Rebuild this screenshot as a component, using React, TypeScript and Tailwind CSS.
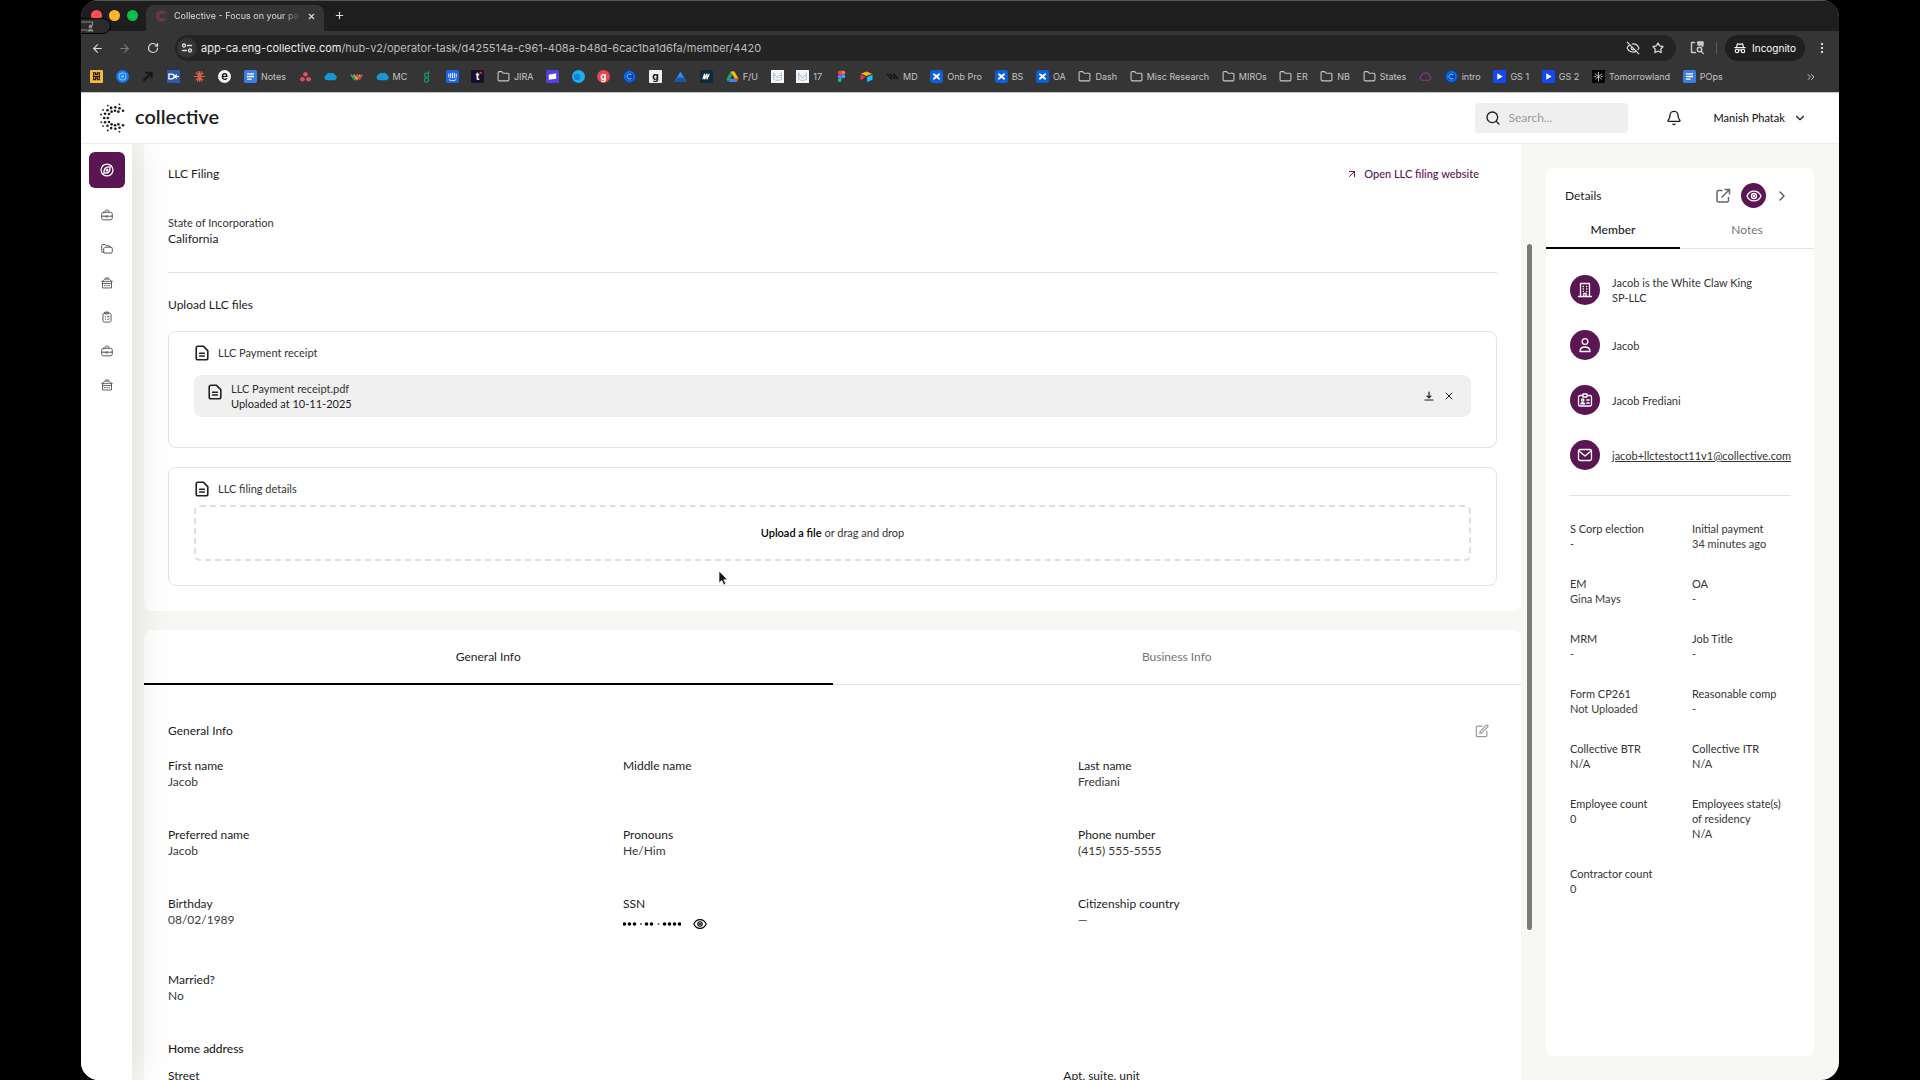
import type { ReactNode } from 'react';
import {
  ArrowLeft,
  ArrowRight,
  ArrowUpRight,
  Bell,
  ChevronDown,
  ChevronRight,
  ChevronsRight,
  EyeOff,
  Folder,
  Plus,
  RotateCw,
  Search,
  Star,
  X,
} from 'lucide-react';

const RINGS = [
  { r: 7.2, size: 1.3, angles: [62, 90, 118, 146, 180, 214, 242, 270, 298] },
  { r: 10.8, size: 1.3, angles: [42, 65, 88, 111, 134, 157, 180, 203, 226, 249, 272, 295, 318] },
  { r: 14.4, size: 0.9, angles: [72, 120, 146, 166, 197, 214, 240, 288] },
];

function CollectiveMark({ className }: { readonly className?: string }) {
  return (
    <svg viewBox="-16 -16 28 32" className={className} fill="currentColor" aria-hidden="true">
      {RINGS.flatMap((ring) =>
        ring.angles.map((angle) => (
          <circle
            key={`${ring.r}-${angle}`}
            cx={ring.r * Math.cos((angle * Math.PI) / 180)}
            cy={-ring.r * Math.sin((angle * Math.PI) / 180)}
            r={ring.size}
          />
        )),
      )}
    </svg>
  );
}

function Line({ children, className, box = 24, width = 2 }: {
  readonly children: ReactNode;
  readonly className?: string;
  readonly box?: number;
  readonly width?: number;
}) {
  return (
    <svg
      viewBox={`0 0 ${box} ${box}`}
      className={className}
      fill="none"
      stroke="currentColor"
      strokeWidth={width}
      strokeLinecap="round"
      strokeLinejoin="round"
      aria-hidden="true"
    >
      {children}
    </svg>
  );
}

function FileIcon() {
  return (
    <Line box={16} width={1.6} className="size-4 shrink-0 text-[#222]">
      <path d="M4 1.2h5.2l4.6 4.4V13a1.8 1.8 0 0 1-1.8 1.8H4A1.8 1.8 0 0 1 2.2 13V3A1.8 1.8 0 0 1 4 1.2Z" />
      <path d="M5.6 8.2h4.8M5.6 11h4.8" />
    </Line>
  );
}

function EyeIcon({ className }: { readonly className?: string }) {
  return (
    <Line className={className}>
      <path d="M1.5 12C3.5 7.2 7.4 4.6 12 4.6S20.5 7.2 22.5 12c-2 4.8-5.9 7.4-10.5 7.4S3.5 16.8 1.5 12Z" />
      <circle cx="12" cy="12" r="3.8" />
      <circle cx="12" cy="12" r="0.8" />
    </Line>
  );
}

function BriefcaseIcon() {
  return (
    <Line box={16} width={1.3} className="size-3">
      <path d="M5.4 4.4V3.2A1.6 1.6 0 0 1 7 1.6h2a1.6 1.6 0 0 1 1.6 1.6v1.2" />
      <rect x="1" y="4.4" width="14" height="10" rx="2.2" />
      <path d="M1 9.6h4.5M10.5 9.6H15M6.6 9.2h2.8v1.4H6.6z" />
    </Line>
  );
}

function FoldersIcon() {
  return (
    <Line box={16} width={1.3} className="size-3">
      <path d="M3.4 12.6H2.6A1.6 1.6 0 0 1 1 11V3.6A1.6 1.6 0 0 1 2.6 2h2.8l1.8 1.8h3.6a1.6 1.6 0 0 1 1.6 1.6" />
      <path d="M6 5.6h7.4A1.6 1.6 0 0 1 15 7.2v4.6a1.6 1.6 0 0 1-1.6 1.6H5.2a1.6 1.6 0 0 1-1.6-1.6V8Z" />
    </Line>
  );
}

function OfficeIcon() {
  return (
    <Line box={16} width={1.2} className="size-3">
      <path d="M1 5.8h14M2.2 5.6 5 2.8h6l2.800 2.800M5.600 1.400h4.800M2 5.800v8.800h12V5.800" />
      <path d="M2 8.600h12M4.600 11.600h1M7.500 11.600h1M10.400 11.600h1" />
    </Line>
  );
}

function ClipboardIcon() {
  return (
    <Line box={16} width={1.3} className="size-3">
      <rect x="2.6" y="2.8" width="10.8" height="12" rx="2" />
      <path d="M6 1.4h4v2.4H6zM5.600 7.600h.6M8.600 7.600h2M5.600 10.800h.6M8.600 10.800h2" />
    </Line>
  );
}

function CompassIcon() {
  return (
    <Line box={16} width={1.5} className="size-[14px]">
      <circle cx="8" cy="8" r="6.8" />
      <path d="M11.6 4.4c-3.4-.2-6.4 1.2-6.8 3.8-.2 1.4-.2 2.4-.4 3.4 3.4.2 6.4-1.2 6.8-3.8.2-1.4.2-2.4.4-3.4Z" />
      <circle cx="8" cy="8" r="1" />
    </Line>
  );
}

function Tile({ bg, children, round = 2 }: { readonly bg: string; readonly children?: ReactNode; readonly round?: number }) {
  return (
    <svg viewBox="0 0 14 14" className="size-[13px] shrink-0" aria-hidden="true">
      <rect width="14" height="14" rx={round} fill={bg} />
      {children}
    </svg>
  );
}

const docIcon = (
  <Tile bg="#3b7de0">
    <path d="M3.2 4.2h7.6M3.2 7h7.6M3.2 9.8h5" stroke="#fff" strokeWidth="1.4" />
  </Tile>
);
const cloudIcon = (
  <Tile bg="none">
    <path d="M3.5 11a3 3 0 0 1-1-5.8A3 3 0 0 1 7 3.6a3.2 3.2 0 0 1 4.8 1.6A3 3 0 0 1 11 11Z" fill="#1797d4" />
  </Tile>
);
const confluenceIcon = (
  <Tile bg="#0c5fd6" round={3}>
    <path d="M3.6 4.2c2 .4 4.8 4.8 6.8 5.6M10.4 4.2c-2 .4-4.800 4.800-6.800 5.600" stroke="#fff" strokeWidth="2.2" fill="none" />
  </Tile>
);
const ringIcon = (
  <Tile bg="#0b3e9c" round={7}>
    <circle cx="7" cy="7" r="5" fill="none" stroke="#1673ee" strokeWidth="1.6" />
    <path d="M9 5.4a2.6 2.6 0 1 0 0 3.2" fill="none" stroke="#3aa0ff" strokeWidth="1.6" />
  </Tile>
);
const gridTile = (
  <Tile bg="#f4f6f8" round={0}>
    <path d="M3 3v8M11 3v8M4 5l3 3.500L10 5M5 11h4" stroke="#5f93c8" fill="none" strokeDasharray="1.5 .8" />
  </Tile>
);
const playIcon = (
  <Tile bg="#1348f2" round={0}>
    <path d="M4.6 3.5v7L10.400 7Z" fill="#fff" />
  </Tile>
);
const folderIcon = <Folder className="size-[13px] shrink-0 text-[#c8c8c8]" strokeWidth={2} />;

function Glyph({ children, fill, size = 10 }: { readonly children: string; readonly fill: string; readonly size?: number }) {
  return (
    <text x="7" y="10.4" textAnchor="middle" fontSize={size} fontWeight="700" fill={fill}>
      {children}
    </text>
  );
}

const bookmarks: { readonly icon: ReactNode; readonly label?: string }[] = [
  {
    icon: (
      <Tile bg="#f6bd3a" round={1}>
        <path d="M3 3h3v2h2V3h3M3 7h8M3 10.500h3v-2h2v2h3M4 3v8M10 3v8" stroke="#221a05" fill="none" strokeWidth="1.3" />
      </Tile>
    ),
  },
  {
    icon: (
      <Tile bg="#1479e6" round={7}>
        <circle cx="7" cy="7" r="3.8" fill="none" stroke="#7fc0ff" strokeWidth="1.2" />
        <circle cx="7" cy="7" r="1.6" fill="#7fc0ff" />
      </Tile>
    ),
  },
  { icon: <Tile bg="none"><path d="M4.5 3h7v6M11 3.5l-8.500 8" stroke="#161616" strokeWidth="2.2" fill="none" /></Tile> },
  {
    icon: (
      <Tile bg="#3158ac" round={0}>
        <path d="M2 4.5h3.2a2.5 2.5 0 0 1 0 5H2ZM8 7h5M10.5 4.8 8.3 7l2.2 2.2" stroke="#fff" strokeWidth="1.3" fill="none" />
      </Tile>
    ),
  },
  {
    icon: (
      <Tile bg="none">
        <path d="M7 1v12M1 7h12M2.8 2.8l8.4 8.4M11.2 2.8l-8.4 8.4M4.6 1.4l4.8 11.2M9.4 1.4 4.6 12.6" stroke="#dc5f48" strokeWidth="1.1" />
      </Tile>
    ),
  },
  { icon: <Tile bg="#f5f5f5" round={7}><Glyph fill="#111" size={12}>e</Glyph></Tile> },
  { icon: docIcon, label: 'Notes' },
  {
    icon: (
      <Tile bg="none">
        <circle cx="7" cy="4.6" r="2.5" fill="#e0505e" />
        <circle cx="3.7" cy="10" r="2.5" fill="#e0505e" />
        <circle cx="10.3" cy="10" r="2.5" fill="#e0505e" />
      </Tile>
    ),
  },
  { icon: cloudIcon },
  {
    icon: (
      <Tile bg="none">
        <path d="m1 5 4 5 3-5" stroke="#2fa36b" strokeWidth="2" fill="none" />
        <path d="m4 5 3.500 5L11 5" stroke="#e9a23a" strokeWidth="1.8" fill="none" />
        <path d="m7.5 5 3 4.500L13 5" stroke="#dc4a45" strokeWidth="2" fill="none" />
      </Tile>
    ),
  },
  { icon: cloudIcon, label: 'MC' },
  {
    icon: (
      <Tile bg="none">
        <circle cx="7" cy="5.6" r="2.2" fill="none" stroke="#159a62" strokeWidth="1.3" />
        <circle cx="7" cy="10.8" r="2.3" fill="none" stroke="#159a62" strokeWidth="1.3" />
        <path d="M8.5 4 10 1.5" stroke="#159a62" strokeWidth="1.3" />
      </Tile>
    ),
  },
  {
    icon: (
      <Tile bg="#1c62ea">
        <path d="M3 4v4M5 3.2v5.6M7 3v6M9 3.2v5.6M11 4v4M3 10.2c2.4 1.8 5.6 1.8 8 0" stroke="#fff" strokeWidth="1" fill="none" />
      </Tile>
    ),
  },
  { icon: <Tile bg="#1a0d2c"><Glyph fill="#fff" size={11}>t</Glyph><path d="M9 2.5h2v2" stroke="#e8453c" strokeWidth="1.2" fill="none" /></Tile> },
  { icon: folderIcon, label: 'JIRA' },
  { icon: <Tile bg="#5440e0"><path d="m3 5 8-1.500v6l-8 1Z" fill="#fff" /></Tile> },
  { icon: <Tile bg="#1cb0f3" round={7}><circle cx="5.5" cy="7.5" r="3.5" fill="#0d86d6" /></Tile> },
  { icon: <Tile bg="#e5484d" round={7}><Glyph fill="#fff">g</Glyph></Tile> },
  { icon: ringIcon },
  { icon: <Tile bg="#f1f1f1" round={1}><Glyph fill="#111" size={11}>g</Glyph></Tile> },
  { icon: <Tile bg="none"><path d="m7 1.500 6.500 11H.5Z" fill="#2f8fe8" /><path d="M4 8h6l3.500 4.500H.5Z" fill="#1554a8" /></Tile> },
  { icon: <Tile bg="#0d2b3c"><path d="m3 10 2-6v6l2.500-6v6L10 4" stroke="#fff" strokeWidth="1.3" fill="none" /></Tile> },
  {
    icon: (
      <Tile bg="none">
        <path d="M5 1.5h4l-5 9-2.500 2-1-3Z" fill="#1fa463" />
        <path d="M5 1.5h4l4.500 8h-4Z" fill="#fbbc05" />
        <path d="M4.5 9.5h9l-2 3.500h-9Z" fill="#4285f4" />
        <path d="M9.5 9.5h4l-2 3.500Z" fill="#ea4335" />
      </Tile>
    ),
    label: 'F/U',
  },
  { icon: gridTile },
  { icon: gridTile, label: '17' },
  {
    icon: (
      <Tile bg="none">
        <path d="M7 .8H5a2 2 0 0 0 0 4h2Z" fill="#f24e1e" />
        <path d="M7 .8h2a2 2 0 0 1 0 4H7Z" fill="#ff7262" />
        <path d="M7 4.8H5a2 2 0 0 0 0 4h2Z" fill="#a259ff" />
        <circle cx="9" cy="6.8" r="2" fill="#1abcfe" />
        <path d="M7 8.8H5a2 2 0 1 0 2 2Z" fill="#0acf83" />
      </Tile>
    ),
  },
  {
    icon: (
      <Tile bg="none">
        <path d="M7 1.5 13 4 7 6.500 1 4Z" fill="#fcb400" />
        <path d="M7.6 7.5 13.500 5v5.500l-5.900 2.300Z" fill="#18bfff" />
        <path d="m.5 5 5.700 2.500L.5 11Z" fill="#f82b60" />
      </Tile>
    ),
  },
  { icon: <Tile bg="none"><path d="m1 4 5.500 6M4.500 4l5.500 6M8 4l5 6" stroke="#141414" strokeWidth="1.6" /></Tile>, label: 'MD' },
  { icon: confluenceIcon, label: 'Onb Pro' },
  { icon: confluenceIcon, label: 'BS' },
  { icon: confluenceIcon, label: 'OA' },
  { icon: folderIcon, label: 'Dash' },
  { icon: folderIcon, label: 'Misc Research' },
  { icon: folderIcon, label: 'MIROs' },
  { icon: folderIcon, label: 'ER' },
  { icon: folderIcon, label: 'NB' },
  { icon: folderIcon, label: 'States' },
  {
    icon: (
      <Tile bg="none">
        <path d="M3.5 11a2.6 2.6 0 0 1-.6-5 4.3 4.3 0 0 1 8.2 0 2.6 2.6 0 0 1-.6 5Z" fill="none" stroke="#93308c" strokeWidth="1.2" />
      </Tile>
    ),
  },
  { icon: ringIcon, label: 'intro' },
  { icon: playIcon, label: 'GS 1' },
  { icon: playIcon, label: 'GS 2' },
  {
    icon: (
      <Tile bg="#050505" round={0}>
        <path d="M7 2v10M3 4l4 3 4-3M3.5 10 7 7l3.5 3M2.5 7h2M9.5 7h2" stroke="#d8d8d8" fill="none" strokeWidth=".9" />
      </Tile>
    ),
    label: 'Tomorrowland',
  },
  { icon: docIcon, label: 'POps' },
];

function BrowserChrome() {
  return (
    <div className="relative z-30 shrink-0 border-b border-[#c4c7c7] bg-[#353535] font-['Inter',sans-serif] text-[#dedede]">
      <div className="flex h-[31px] items-end border-t border-[#555] bg-[#1e1e1e] pl-2.5">
        <div className="mb-2.5 flex gap-[7px]">
          <span className="size-[11px] rounded-full bg-[#ff4f56]" />
          <span className="size-[11px] rounded-full bg-[#fdb52c]" />
          <span className="size-[11px] rounded-full bg-[#0cbd4d]" />
        </div>
        <div className="ml-2 flex h-[26px] w-[178px] items-center gap-1.5 rounded-t-lg bg-[#353535] px-2 pb-1">
          <CollectiveMark className="size-3.5 shrink-0 text-[#e0405e]" />
          <span className="flex-1 overflow-hidden whitespace-nowrap mask-r-from-85% text-[9px]">Collective - Focus on your pa</span>
          <button type="button" aria-label="Close tab" className="shrink-0"><X className="size-[9px]" strokeWidth={3} /></button>
        </div>
        <button type="button" aria-label="New tab" className="mb-[10px] ml-2.5"><Plus className="size-[11px]" strokeWidth={2.5} /></button>
      </div>
      <div className="flex items-center py-1 pr-4 pl-2.5">
        <button type="button" aria-label="Back"><ArrowLeft className="size-[13px]" /></button>
        <button type="button" aria-label="Forward" className="ml-3.5 text-[#7b7b7b]"><ArrowRight className="size-[13px]" /></button>
        <button type="button" aria-label="Reload" className="ml-4"><RotateCw className="size-3" strokeWidth={2.4} /></button>
        <div className="ml-4 flex h-[26px] flex-1 items-center rounded-full bg-[#242424] pr-3 pl-0.5">
          <span className="grid size-5 place-items-center rounded-full bg-[#353535]">
            <Line box={12} width={1.3} className="size-3">
              <circle cx="3" cy="3.5" r="1.5" />
              <path d="M6.5 3.5h4M1.5 8.5h4" />
              <circle cx="9" cy="8.5" r="1.5" />
            </Line>
          </span>
          <p className="ml-1 flex-1 text-[11px] text-[#bdbdbd]">
            <span className="text-[#ececec]">app-ca.eng-collective.com</span>
            /hub-v2/operator-task/d425514a-c961-408a-b48d-6cac1ba1d6fa/member/4420
          </p>
          <EyeOff className="size-3.5" />
          <button type="button" aria-label="Bookmark this tab" className="ml-3"><Star className="size-3" strokeWidth={2.4} /></button>
        </div>
        <Line box={14} width={1.4} className="ml-3.5 size-[14px] text-[#c9c9c9]">
          <path d="M5.5 11.5h-4v-10h3M7.5 1.5h5v4" />
          <path d="M8 1h5v3H8z" fill="currentColor" />
          <circle cx="9.5" cy="8.5" r="2.2" />
          <path d="m11.2 10.2 2 2.2" />
        </Line>
        <span className="mr-2 ml-3 h-3 w-px bg-[#5c5c5c]" />
        <div className="flex h-[26px] items-center gap-1.5 rounded-full bg-[#1f1f1f] px-[9px] text-[10px] text-white">
          <Line box={14} width={1.3} className="size-3">
            <path d="M1 6.5h12M3 6l1-4 3 .8L10 2l1 4M5.5 9.8c1-.8 2-.8 3 0" />
            <circle cx="3.5" cy="10.5" r="2" />
            <circle cx="10.5" cy="10.5" r="2" />
          </Line>
          Incognito
        </div>
        <button type="button" aria-label="Browser menu" className="ml-4 flex flex-col gap-[2px]">
          <span className="size-[2px] bg-[#dedede]" />
          <span className="size-[2px] bg-[#dedede]" />
          <span className="size-[2px] bg-[#dedede]" />
        </button>
      </div>
      <div className="flex h-[27px] items-center pr-[22px] pb-1 pl-[9px] text-[9px] text-[#c4c4c4]">
        <ul className="mr-[82px] flex flex-1 items-center justify-between">
          {bookmarks.map((bookmark, index) => (
            <li key={index}>
              <a href="#" aria-label={bookmark.label ?? 'Bookmark'} className="flex items-center gap-1 whitespace-nowrap">
                {bookmark.icon}
                {bookmark.label}
              </a>
            </li>
          ))}
        </ul>
        <ChevronsRight className="size-3" />
      </div>
      <div className="absolute top-[18px] -left-4 flex h-4 w-[46px] items-center rounded-full border border-black bg-[#2b2b2b] pl-3.5">
        <Line box={14} width={1.2} className="size-3.5 text-[#8d8d8d]">
          <path d="M0 3h12.5v3M0 11h7" />
          <circle cx="10.5" cy="7.5" r="1.3" fill="currentColor" />
          <path d="M8 12c.5-2 4.500-2 5 0Z" fill="currentColor" />
        </Line>
      </div>
    </div>
  );
}

function AppHeader() {
  return (
    <header className="relative z-20 flex h-[51px] shrink-0 items-center border-b border-[#ededed] bg-white pr-8 pl-[18px]">
      <a href="#" className="flex items-center gap-2">
        <CollectiveMark className="h-8 w-7" />
        <span className="pb-1 text-[20px] leading-6 font-semibold">collective</span>
      </a>
      <label className="ml-auto flex h-[30px] w-[153px] items-center gap-2 rounded-sm bg-[#efefef] pl-[10px]">
        <Search className="size-4 shrink-0" />
        <input type="search" aria-label="Search" placeholder="Search..." className="w-full bg-transparent text-xs outline-none placeholder:text-[#9a9a9a]" />
      </label>
      <button type="button" aria-label="Notifications" className="ml-[38px]"><Bell className="size-4" /></button>
      <button type="button" className="ml-8 flex items-center gap-2 text-[11px] font-medium">
        Manish Phatak
        <ChevronDown className="size-3.5" />
      </button>
    </header>
  );
}

const navItems = [
  { label: 'Work', icon: <BriefcaseIcon /> },
  { label: 'Folders', icon: <FoldersIcon /> },
  { label: 'Offices', icon: <OfficeIcon /> },
  { label: 'Tasks', icon: <ClipboardIcon /> },
  { label: 'Business', icon: <BriefcaseIcon /> },
  { label: 'Accounts', icon: <OfficeIcon /> },
];

function Sidebar() {
  return (
    <nav className="z-10 flex w-[51px] shrink-0 flex-col items-center bg-white pt-2 text-[#555] shadow-[0_0_40px_rgba(40,45,20,0.14)]">
      <a href="#" aria-label="Home" className="mb-[10px] grid size-9 place-items-center rounded-md bg-[#5a1552] text-white">
        <CompassIcon />
      </a>
      {navItems.map((item) => (
        <a key={item.label} href="#" aria-label={item.label} className="grid h-[34px] w-9 place-items-center">
          {item.icon}
        </a>
      ))}
    </nav>
  );
}

function Field({ label, children, small }: { readonly label: string; readonly children?: ReactNode; readonly small?: boolean }) {
  return (
    <div className={small ? 'text-[11px] leading-[15px] text-[#333]' : 'text-xs leading-4'}>
      <dt>{label}</dt>
      <dd className="text-[#3a3a3a]">{children}</dd>
    </div>
  );
}

function FilingCard() {
  return (
    <section className="rounded-b-lg bg-white px-6 pt-[22px] pb-[25px]">
      <div className="flex items-center justify-between pr-[18px]">
        <h2 className="text-xs leading-4">LLC Filing</h2>
        <a href="#" className="flex items-center gap-1.5 text-[11px] leading-4 font-medium text-[#5a1552]">
          <ArrowUpRight className="size-3" />
          Open LLC filing website
        </a>
      </div>
      <dl className="mt-[33px] border-b border-[#dfdfdf] pb-[25px] leading-4">
        <dt className="text-[11px] text-[#333]">State of Incorporation</dt>
        <dd className="text-xs leading-4">California</dd>
      </dl>
      <h3 className="mt-6 text-xs leading-4">Upload LLC files</h3>
      <div className="mt-[18px] rounded-lg border border-[#e2e2e2] px-[25px] pt-[13px] pb-[30px] text-[11px]">
        <div className="flex items-center gap-2 leading-4 text-[#333]">
          <FileIcon />
          LLC Payment receipt
        </div>
        <div className="mt-3.5 flex items-center rounded-lg bg-[#f0f0f0] px-3 py-1.5 leading-[15px]">
          <div className="flex flex-1 items-start gap-2 pl-px">
            <span className="pt-[3px]"><FileIcon /></span>
            <div>
              <p className="text-[#333]">LLC Payment receipt.pdf</p>
              <p>Uploaded at 10-11-2025</p>
            </div>
          </div>
          <button type="button" aria-label="Download file">
            <Line box={10} width={1.2} className="size-2.5">
              <path d="M5 1v5.500M3 4.800l2 2 2-2M1 9h8" />
            </Line>
          </button>
          <button type="button" aria-label="Remove file" className="mr-1 ml-[9px]"><X className="size-3" /></button>
        </div>
      </div>
      <div className="mt-[19px] rounded-lg border border-[#e2e2e2] px-[25px] pt-[13px] pb-6 text-[11px] leading-4">
        <div className="flex items-center gap-2 text-[#333]">
          <FileIcon />
          LLC filing details
        </div>
        <button type="button" className="mt-2 block w-full rounded-md border-2 border-dashed border-[#dfdfd5] py-[18px] text-[#333]">
          <strong className="font-semibold text-black">Upload a file</strong> or drag and drop
        </button>
      </div>
    </section>
  );
}

function InfoCard() {
  return (
    <section className="mt-[19px] rounded-t-lg bg-white">
      <div role="tablist" className="flex text-xs leading-4">
        <button type="button" role="tab" aria-selected="true" className="flex-1 border-b-2 border-black pt-[19px] pb-[18px]">General Info</button>
        <button type="button" role="tab" aria-selected="false" className="flex-1 border-b border-[#e2e2e2] pt-[19px] pb-[19px] text-[#757575]">Business Info</button>
      </div>
      <div className="px-6 pt-[38px]">
        <div className="flex items-center justify-between pr-2">
          <h2 className="text-xs leading-4">General Info</h2>
          <button type="button" aria-label="Edit general info" className="text-[#9a9a9a]">
            <Line box={16} width={1.4} className="size-3.5">
              <path d="M8 2.5H3.2A1.7 1.7 0 0 0 1.5 4.2v8.6a1.7 1.7 0 0 0 1.7 1.7h8.6a1.7 1.7 0 0 0 1.7-1.7V8" />
              <path d="m6 8.4 6.8-6.9a1.3 1.3 0 0 1 1.8 1.8L7.7 10.2l-2.3.6Z" />
            </Line>
          </button>
        </div>
        <dl className="mt-[19px] grid grid-cols-3 gap-x-9 gap-y-[37px]">
          <Field label="First name">Jacob</Field>
          <Field label="Middle name" />
          <Field label="Last name">Frediani</Field>
          <Field label="Preferred name">Jacob</Field>
          <Field label="Pronouns">He/Him</Field>
          <Field label="Phone number">(415) 555-5555</Field>
          <Field label="Birthday">08/02/1989</Field>
          <Field label="SSN">
            <span className="flex h-[23px] items-center gap-3 text-black">
              <svg viewBox="0 0 58 6" className="h-1.5 w-[58px]" fill="currentColor" role="img" aria-label="Hidden number">
                {[2, 7, 12, 24, 29, 42, 47, 52, 57].map((cx) => <circle key={cx} cx={cx - 0.5} cy="3" r="1.8" />)}
                <path d="M17 2.6h2v.8h-2zM34.5 2.6h2v.8h-2z" />
              </svg>
              <button type="button" aria-label="Show SSN"><EyeIcon className="size-3.5" /></button>
            </span>
          </Field>
          <Field label="Citizenship country">—</Field>
          <Field label="Married?">No</Field>
        </dl>
        <h3 className="mt-[37px] text-xs leading-4 font-medium">Home address</h3>
        <div className="mt-[11px] flex gap-7 text-xs leading-4">
          <span className="flex-2">Street</span>
          <span className="flex-1">Apt, suite, unit</span>
        </div>
      </div>
    </section>
  );
}

const contacts = [
  {
    text: 'Jacob is the White Claw King SP-LLC',
    icon: (
      <>
        <path d="M3.5 14.5v-13h9v13M1.5 14.5h13M6.8 14.5v-3h2.4v3" />
        <path d="M6.2 4.5h.2M9.6 4.5h.2M6.2 7h.2M9.6 7h.2M6.2 9.3h.2M9.6 9.3h.2" />
      </>
    ),
  },
  {
    text: 'Jacob',
    icon: (
      <>
        <circle cx="8" cy="4.5" r="2.9" />
        <path d="M3 14.5c0-2.8 1.8-4.5 5-4.5s5 1.7 5 4.5Z" />
      </>
    ),
  },
  {
    text: 'Jacob Frediani',
    icon: (
      <>
        <path d="M5.8 3.5H3A1.5 1.5 0 0 0 1.5 5v7.5A1.5 1.5 0 0 0 3 14h10a1.5 1.5 0 0 0 1.5-1.5V5A1.5 1.5 0 0 0 13 3.5h-2.8M6 2h4v3H6zM9.8 8h2.4M9.8 11h2.4" />
        <circle cx="5.7" cy="8" r="1.2" />
        <path d="M3.8 11.8c.3-1.6 3.5-1.6 3.8 0Z" />
      </>
    ),
  },
  {
    text: 'jacob+llctestoct11v1@collective.com',
    href: 'mailto:jacob+llctestoct11v1@collective.com',
    icon: (
      <>
        <rect x="1.5" y="2.5" width="13" height="11" rx="1.8" />
        <path d="m2 4 6 5 6-5" />
      </>
    ),
  },
];

const details = [
  ['S Corp election', '-'],
  ['Initial payment', '34 minutes ago'],
  ['EM', 'Gina Mays'],
  ['OA', '-'],
  ['MRM', '-'],
  ['Job Title', '-'],
  ['Form CP261', 'Not Uploaded'],
  ['Reasonable comp', '-'],
  ['Collective BTR', 'N/A'],
  ['Collective ITR', 'N/A'],
  ['Employee count', '0'],
  ['Employees state(s) of residency', 'N/A'],
  ['Contractor count', '0'],
];

function DetailsPanel() {
  return (
    <aside className="my-6 mr-[25px] w-[268px] shrink-0 rounded-lg bg-white">
      <div className="flex items-center pt-[15px] pr-6 pl-[19px]">
        <h2 className="flex-1 text-xs">Details</h2>
        <button type="button" aria-label="Open in new window" className="text-[#666]">
          <Line box={16} width={1.5} className="size-4">
            <path d="M7 2.5H3.500A1.5 1.5 0 0 0 2 4v8.5A1.5 1.5 0 0 0 3.5 14H12a1.5 1.5 0 0 0 1.5-1.5v-3M10 1.500h4.500V6M14 2 7 9" />
          </Line>
        </button>
        <button type="button" aria-label="Toggle visibility" className="ml-2.5 grid size-[25px] place-items-center rounded-full bg-[#5a1552] text-white">
          <EyeIcon className="size-4" />
        </button>
        <button type="button" aria-label="Collapse details" className="ml-2 text-[#555]"><ChevronRight className="size-4" /></button>
      </div>
      <div role="tablist" className="flex text-xs leading-4">
        <button type="button" role="tab" aria-selected="true" className="flex-1 border-b-2 border-black pt-3.5 pb-[9px] font-medium">Member</button>
        <button type="button" role="tab" aria-selected="false" className="flex-1 border-b border-[#e2e2e2] pt-3.5 pb-2.5 text-[#757575]">Notes</button>
      </div>
      <div className="px-6 py-[26px] text-[11px] leading-[15px] text-[#333]">
        <ul className="flex flex-col gap-[25px] border-b border-[#dfdfdf] pb-[25px]">
          {contacts.map((contact) => (
            <li key={contact.text} className="flex items-center gap-3">
              <span className="grid size-[30px] shrink-0 place-items-center rounded-full bg-[#5a1552] text-white">
                <Line box={16} width={1.3} className="size-4">{contact.icon}</Line>
              </span>
              {contact.href ? <a href={contact.href} className="underline">{contact.text}</a> : <span className="max-w-36">{contact.text}</span>}
            </li>
          ))}
        </ul>
        <dl className="mt-[25px] grid grid-cols-2 gap-x-6 gap-y-[25px]">
          {details.map(([label, value]) => <Field key={label} label={label} small>{value}</Field>)}
        </dl>
      </div>
    </aside>
  );
}

export default function App() {
  return (
    <div className="h-screen bg-black px-[81px] font-['Lato',sans-serif] text-[#1c1c1c]">
      <div className="relative flex h-full flex-col overflow-hidden rounded-[18px] bg-[#f7f7f4]">
        <BrowserChrome />
        <AppHeader />
        <div className="flex min-h-0 flex-1">
          <Sidebar />
          <main className="ml-3 min-w-0 flex-1 overflow-hidden">
            <FilingCard />
            <InfoCard />
          </main>
          <div className="w-[25px] shrink-0 pt-[100px] pl-1.5">
            <div className="h-[82%] w-[5px] rounded-full bg-[#7b7c78]" />
          </div>
          <DetailsPanel />
        </div>
        <svg viewBox="0 0 10 16" className="absolute top-[570px] left-[637px] z-40 h-4 w-2.5" aria-hidden="true">
          <path d="M1 1v12l2.8-2.6L5.8 15l2-.9-2-4.400h3.700Z" fill="#111" stroke="#fff" strokeWidth=".7" />
        </svg>
      </div>
    </div>
  );
}
